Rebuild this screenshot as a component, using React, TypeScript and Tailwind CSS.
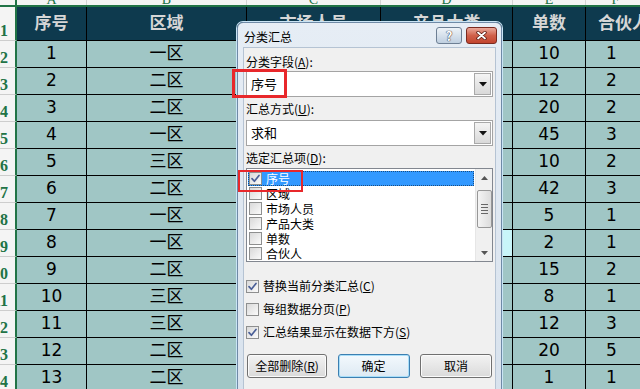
import React from "react";

const rows: [number, string, number, number][] = [
  [1, "一区", 10, 1],
  [2, "二区", 12, 2],
  [3, "二区", 20, 2],
  [4, "一区", 45, 3],
  [5, "三区", 10, 2],
  [6, "二区", 42, 3],
  [7, "一区", 5, 1],
  [8, "一区", 2, 1],
  [9, "二区", 15, 2],
  [10, "三区", 8, 1],
  [11, "三区", 12, 3],
  [12, "二区", 20, 5],
  [13, "二区", 1, 1],
];

const fields = ["序号", "区域", "市场人员", "产品大类", "单数", "合伙人"];

function ColLetter(props: { w: string; letter: string }) {
  return (
    <div className={`${props.w} shrink-0 h-full overflow-hidden flex items-end justify-center border-r border-[#d4d4d4]`}>
      <span className="text-[14px] leading-[11px] text-[#217346] font-['Liberation_Serif',serif]">{props.letter}</span>
    </div>
  );
}

function RowNum(props: { n: number; h: string }) {
  return (
    <div className={`${props.h} w-[17px] shrink-0 overflow-hidden flex items-end justify-end pr-[7px] pb-[1px] bg-[#f4f4f4] border-r-2 border-r-[#217346] border-b border-b-[#cdcdcd]`}>
      <span className="text-[16px] leading-[16px] font-bold text-[#217346] font-['Liberation_Serif',serif]">{props.n}</span>
    </div>
  );
}

function Check(props: { checked?: boolean }) {
  return (
    <div className="w-[13px] h-[13px] shrink-0 border border-[#8e8f8f] bg-gradient-to-br from-[#d9d9d9] to-[#fbfbfb] flex items-center justify-center">
      {props.checked && (
        <svg width="11" height="11" viewBox="0 0 11 11" fill="none">
          <path d="M2 5.6 L4.4 8.3 L9 2.4" stroke="#4a5f97" strokeWidth="1.7" strokeLinecap="round" strokeLinejoin="round" />
        </svg>
      )}
    </div>
  );
}

function Combo(props: { value: string }) {
  return (
    <div className="mx-[1px] h-[26px] bg-white border border-[#a4a4a4] flex items-center justify-between pl-[4px] pr-[1px]">
      <span className="text-[13px] leading-[16px] text-black">{props.value}</span>
      <div className="w-[17px] h-[22px] border border-[#a9a9a9] bg-gradient-to-b from-[#f4f4f4] to-[#d9d9d9] flex items-center justify-center">
        <svg width="8" height="5" viewBox="0 0 8 5">
          <path d="M0 0 H8 L4 4.5 Z" fill="#111" />
        </svg>
      </div>
    </div>
  );
}

function Btn(props: { children: React.ReactNode; w: string; focus?: boolean }) {
  return (
    <div
      className={`${props.w} h-[24px] rounded-[3px] border flex items-center justify-center text-[12px] ${
        props.focus
          ? "border-[#3c7fb1] bg-gradient-to-b from-[#f3f9fd] to-[#dde9f3] shadow-[inset_0_0_0_1px_#a8def9]"
          : "border-[#707070] bg-gradient-to-b from-[#f3f3f3] to-[#dadada] shadow-[inset_0_0_0_1px_#fbfbfb]"
      }`}
    >
      {props.children}
    </div>
  );
}

function Dialog() {
  return (
    <div className="absolute left-[237px] top-[22px] w-[265px] h-[380px] rounded-t-[6px] border border-[#6f8aa6] bg-gradient-to-b from-[#e6edf5] to-[#d8e2ed] px-[5px] flex flex-col font-['Noto_Sans_CJK_SC',sans-serif] text-black shadow-[0_0_0_1px_#c9e4f5]">
      <div className="h-[24px] flex justify-between">
        <span className="text-[12px] leading-[24px] pl-[1px] pt-[2px]">分类汇总</span>
        <div className="flex gap-[4px] mt-[4px] -mr-[1px]">
          <div className="w-[26px] h-[17px] rounded-[3px] border border-[#6d7f94] bg-gradient-to-b from-[#eef3f8] to-[#bfcfe0] flex items-center justify-center">
            <span className="text-[13px] leading-[13px] font-bold text-white [text-shadow:0_0_1px_#223,0_0_1px_#223]">?</span>
          </div>
          <div className="w-[31px] h-[17px] rounded-[3px] border border-[#7a2a1f] bg-gradient-to-b from-[#e9a89a] via-[#d0604a] to-[#c2442e] flex items-center justify-center">
            <svg width="11" height="9" viewBox="0 0 11 9">
              <path d="M2 1.5 L9 7.5 M9 1.5 L2 7.5" stroke="#5a1a12" strokeWidth="3.4" strokeLinecap="round" />
              <path d="M2 1.5 L9 7.5 M9 1.5 L2 7.5" stroke="#fff" strokeWidth="1.8" strokeLinecap="round" />
            </svg>
          </div>
        </div>
      </div>
      <div className="flex-1 bg-[#f0f0f0] border border-[#b5c3d3] px-[1px] flex flex-col text-[12px]">
        <div className="mt-[6px] pl-[1px] leading-[16px]">
          分类字段(<span className="underline">A</span>):
        </div>
        <div className="mt-[1px]">
          <Combo value="序号" />
        </div>
        <div className="mt-[4px] pl-[1px] leading-[16px]">
          汇总方式(<span className="underline">U</span>):
        </div>
        <div className="mt-[3px]">
          <Combo value="求和" />
        </div>
        <div className="mt-[4px] pl-[1px] leading-[16px]">
          选定汇总项(<span className="underline">D</span>):
        </div>
        <div className="mt-[2px] mx-[1px] h-[94px] bg-white border border-[#828790] flex">
          <div className="flex-1 flex flex-col pt-[2px] pl-[1px] pr-[1px]">
            {fields.map((f, i) => (
              <div
                key={f}
                className={`h-[15px] shrink-0 flex items-center gap-[4px] pl-[1px] ${
                  i === 0 ? "bg-[#3399ff] text-white outline-1 outline-dotted outline-[#1a4d80] -outline-offset-1" : ""
                }`}
              >
                <Check checked={i === 0} />
                <span className="text-[12px] leading-[15px]">{f}</span>
              </div>
            ))}
          </div>
          <div className="w-[17px] shrink-0 bg-[#f0f0f0] border-l border-[#e6e6e6] flex flex-col items-center">
            <div className="h-[17px] flex items-center justify-center">
              <svg width="7" height="4" viewBox="0 0 7 4">
                <path d="M0 4 L3.5 0 L7 4 Z" fill="#555" />
              </svg>
            </div>
            <div className="mt-[4px] w-[15px] h-[38px] rounded-[2px] border border-[#979797] bg-gradient-to-r from-[#f4f4f4] to-[#dcdcdc] flex flex-col items-center justify-center gap-[2px]">
              <div className="w-[7px] h-[1px] bg-[#666]" />
              <div className="w-[7px] h-[1px] bg-[#666]" />
              <div className="w-[7px] h-[1px] bg-[#666]" />
              <div className="w-[7px] h-[1px] bg-[#666]" />
            </div>
            <div className="flex-1" />
            <div className="h-[16px] flex items-center justify-center">
              <svg width="7" height="4" viewBox="0 0 7 4">
                <path d="M0 0 L3.5 4 L7 0 Z" fill="#555" />
              </svg>
            </div>
          </div>
        </div>
        <div className="mt-[16px] pl-[1px] h-[16px] flex items-center gap-[4px]">
          <Check checked />
          <span>
            替换当前分类汇总(<span className="underline">C</span>)
          </span>
        </div>
        <div className="mt-[7px] pl-[1px] h-[16px] flex items-center gap-[4px]">
          <Check />
          <span>
            每组数据分页(<span className="underline">P</span>)
          </span>
        </div>
        <div className="mt-[7px] pl-[1px] h-[16px] flex items-center gap-[4px]">
          <Check checked />
          <span>
            汇总结果显示在数据下方(<span className="underline">S</span>)
          </span>
        </div>
        <div className="mt-[14px] px-[2px] flex justify-between">
          <Btn w="w-[80px]">
            全部删除(<span className="underline">R</span>)
          </Btn>
          <Btn w="w-[72px]" focus>
            确定
          </Btn>
          <Btn w="w-[72px]">取消</Btn>
        </div>
      </div>
    </div>
  );
}

export default function App() {
  const cell = "shrink-0 h-full border-r border-b border-black flex items-center justify-center whitespace-nowrap overflow-hidden";
  return (
    <div className="relative w-[640px] h-[389px] overflow-hidden bg-white font-['DejaVu_Sans','Noto_Sans_CJK_SC',sans-serif]">
      <div className="flex flex-col">
        <div className="flex h-[7px] bg-[#f4f4f4] border-b-2 border-[#217346]">
          <div className="w-[17px] shrink-0 border-r-2 border-[#217346]" />
          <ColLetter w="w-[70px]" letter="A" />
          <ColLetter w="w-[160px]" letter="B" />
          <ColLetter w="w-[134px]" letter="C" />
          <ColLetter w="w-[132px]" letter="D" />
          <ColLetter w="w-[73px]" letter="E" />
          <ColLetter w="w-[60px]" letter="F" />
        </div>
        <div className="flex h-[34px] bg-[#0e3a4e] text-[17px] font-bold text-[#d6d6d6]">
          <RowNum n={1} h="h-[34px]" />
          <div className={`${cell} w-[70px]`}>序号</div>
          <div className={`${cell} w-[160px]`}>区域</div>
          <div className={`${cell} w-[134px]`}>市场人员</div>
          <div className={`${cell} w-[132px]`}>产品大类</div>
          <div className={`${cell} w-[73px]`}>单数</div>
          <div className={`${cell} w-[60px] justify-start pl-[12px]`}>合伙人</div>
        </div>
        {rows.map((r, i) => (
          <div key={r[0]} className="flex h-[27px] bg-[#a0c6c5] text-[17px] text-black">
            <RowNum n={i + 2} h="h-[27px]" />
            <div className={`${cell} w-[70px]`}>{r[0]}</div>
            <div className={`${cell} w-[160px]`}>{r[1]}</div>
            <div className={`${cell} w-[134px]`} />
            <div className={`${cell} w-[132px] ${i === 7 ? "bg-[#c8f5f9]" : ""}`} />
            <div className={`${cell} w-[73px]`}>{r[2]}</div>
            <div className={`${cell} w-[60px] justify-start pl-[20px]`}>{r[3]}</div>
          </div>
        ))}
      </div>
      <Dialog />
      <div className="absolute left-[232px] top-[69px] w-[55px] h-[29px] border-[3px] border-[#e8282b]" />
      <div className="absolute left-[238px] top-[170px] w-[65px] h-[22px] border-2 border-[#e8282b]" />
    </div>
  );
}
